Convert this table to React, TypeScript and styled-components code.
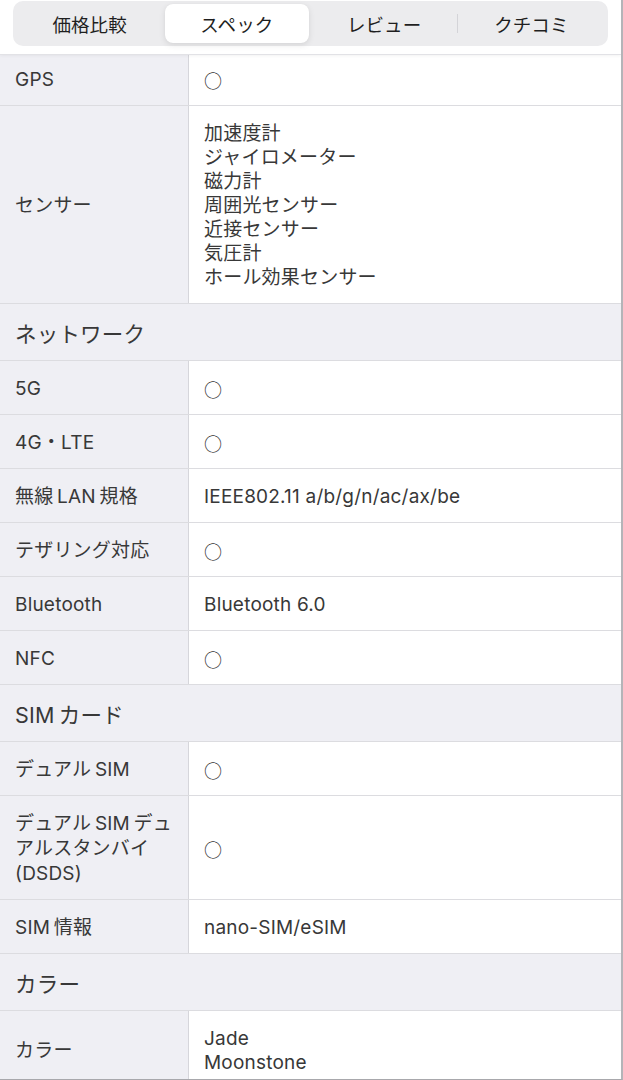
import React from "react";
import styled, { createGlobalStyle } from "styled-components";

const Global = createGlobalStyle`
  html, body { margin: 0; padding: 0; background: #ffffff; }
  body {
    font-family: Inter, "Noto Sans CJK JP", sans-serif;
    color: #333333;
    -webkit-font-smoothing: antialiased;
  }
  * { box-sizing: border-box; }
`;

const Page = styled.div`
  width: 623px;
  height: 1080px;
  overflow: hidden;
  position: relative;
  border-right: 2px solid #b4b4b8;
  border-bottom: 1px solid #a8a8ac;
  background: #ffffff;
`;

const Header = styled.div`
  position: sticky;
  top: 0;
  z-index: 2;
  background: #ffffff;
  padding: 1px 13px 8px 13px;
  border-bottom: 1px solid #e2e2e6;
  box-shadow: 0 1px 3px rgba(0, 0, 0, 0.05);
`;

const Segmented = styled.div`
  display: grid;
  grid-template-columns: repeat(4, 1fr);
  height: 45px;
  padding: 3px;
  background: #ececee;
  border-radius: 10px;
`;

const Tab = styled.div<{ $active?: boolean; $divider?: boolean }>`
  position: relative;
  display: flex;
  align-items: center;
  justify-content: center;
  font-family: "Noto Sans CJK JP", sans-serif;
  font-size: 18.5px;
  letter-spacing: 0.1px;
  font-weight: 400;
  color: #1f1f1f;
  border-radius: 8px;
  margin: 0 ${(p) => (p.$active ? "2px" : "0")};
  background: ${(p) => (p.$active ? "#ffffff" : "transparent")};
  box-shadow: ${(p) =>
    p.$active ? "0 2px 6px rgba(0,0,0,0.10), 0 0 1px rgba(0,0,0,0.06)" : "none"};

  &::before {
    content: "";
    display: ${(p) => (p.$divider ? "block" : "none")};
    position: absolute;
    left: -1px;
    top: 10px;
    bottom: 10px;
    width: 1px;
    background: #d4d4d8;
  }
`;

const Table = styled.div`
  display: flex;
  flex-direction: column;
  margin-top: -3px;
`;

const Row = styled.div`
  display: grid;
  grid-template-columns: 189px 1fr;
  border-bottom: 1px solid #dcdce0;
`;

const Label = styled.div`
  display: flex;
  align-items: center;
  background: #efeff4;
  border-right: 1px solid #d6d6db;
  padding: 15px 8px 13px 15px;
  font-size: 19px;
  letter-spacing: 0.2px;
  line-height: 25px;
  color: #383838;
`;

const Value = styled.div`
  display: flex;
  flex-direction: column;
  justify-content: center;
  padding: 16px 15px 13px 15px;
  font-size: 19px;
  letter-spacing: 0.2px;
  line-height: 24px;
  color: #383838;
  background: #ffffff;
`;

const Circle = styled.span`
  font-family: "Noto Sans CJK JP", sans-serif;
  font-size: 18px;
  line-height: 24px;
  color: #333333;
`;

const Section = styled.div`
  display: flex;
  align-items: center;
  height: 57px;
  padding: 0 15px;
  background: #efeff4;
  border-bottom: 1px solid #dcdce0;
  font-size: 21.5px;
  letter-spacing: 0.2px;
  color: #383838;
`;

type Item =
  | { kind: "section"; title: string }
  | { kind: "row"; label: React.ReactNode; values: string[] };

const O = "○";
const T = "\u2009";

const items: Item[] = [
  { kind: "row", label: "GPS", values: [O] },
  {
    kind: "row",
    label: "センサー",
    values: [
      "加速度計",
      "ジャイロメーター",
      "磁力計",
      "周囲光センサー",
      "近接センサー",
      "気圧計",
      "ホール効果センサー",
    ],
  },
  { kind: "section", title: "ネットワーク" },
  { kind: "row", label: "5G", values: [O] },
  { kind: "row", label: "4G・LTE", values: [O] },
  { kind: "row", label: `無線${T}LAN${T}規格`, values: ["IEEE802.11 a/b/g/n/ac/ax/be"] },
  { kind: "row", label: "テザリング対応", values: [O] },
  { kind: "row", label: "Bluetooth", values: ["Bluetooth 6.0"] },
  { kind: "row", label: "NFC", values: [O] },
  { kind: "section", title: `SIM${T}カード` },
  { kind: "row", label: `デュアル${T}SIM`, values: [O] },
  {
    kind: "row",
    label: (
      <span>
        {`デュアル${T}SIM${T}デュ`}
        <br />
        アルスタンバイ
        <br />
        (DSDS)
      </span>
    ),
    values: [O],
  },
  { kind: "row", label: `SIM${T}情報`, values: ["nano-SIM/eSIM"] },
  { kind: "section", title: "カラー" },
  { kind: "row", label: "カラー", values: ["Jade", "Moonstone"] },
];

const tabs = ["価格比較", "スペック", "レビュー", "クチコミ"];
const activeIndex = 1;

export default function App() {
  return (
    <>
      <Global />
      <Page>
        <Header>
          <Segmented>
            {tabs.map((t, i) => (
              <Tab
                key={t}
                $active={i === activeIndex}
                $divider={i > 0 && i !== activeIndex && i - 1 !== activeIndex}
              >
                {t}
              </Tab>
            ))}
          </Segmented>
        </Header>
        <Table>
          {items.map((it, idx) =>
            it.kind === "section" ? (
              <Section key={idx}>{it.title}</Section>
            ) : (
              <Row key={idx}>
                <Label>{it.label}</Label>
                <Value>
                  {it.values.map((v, j) =>
                    v === O ? <Circle key={j}>{v}</Circle> : <span key={j}>{v}</span>
                  )}
                </Value>
              </Row>
            )
          )}
        </Table>
      </Page>
    </>
  );
}
